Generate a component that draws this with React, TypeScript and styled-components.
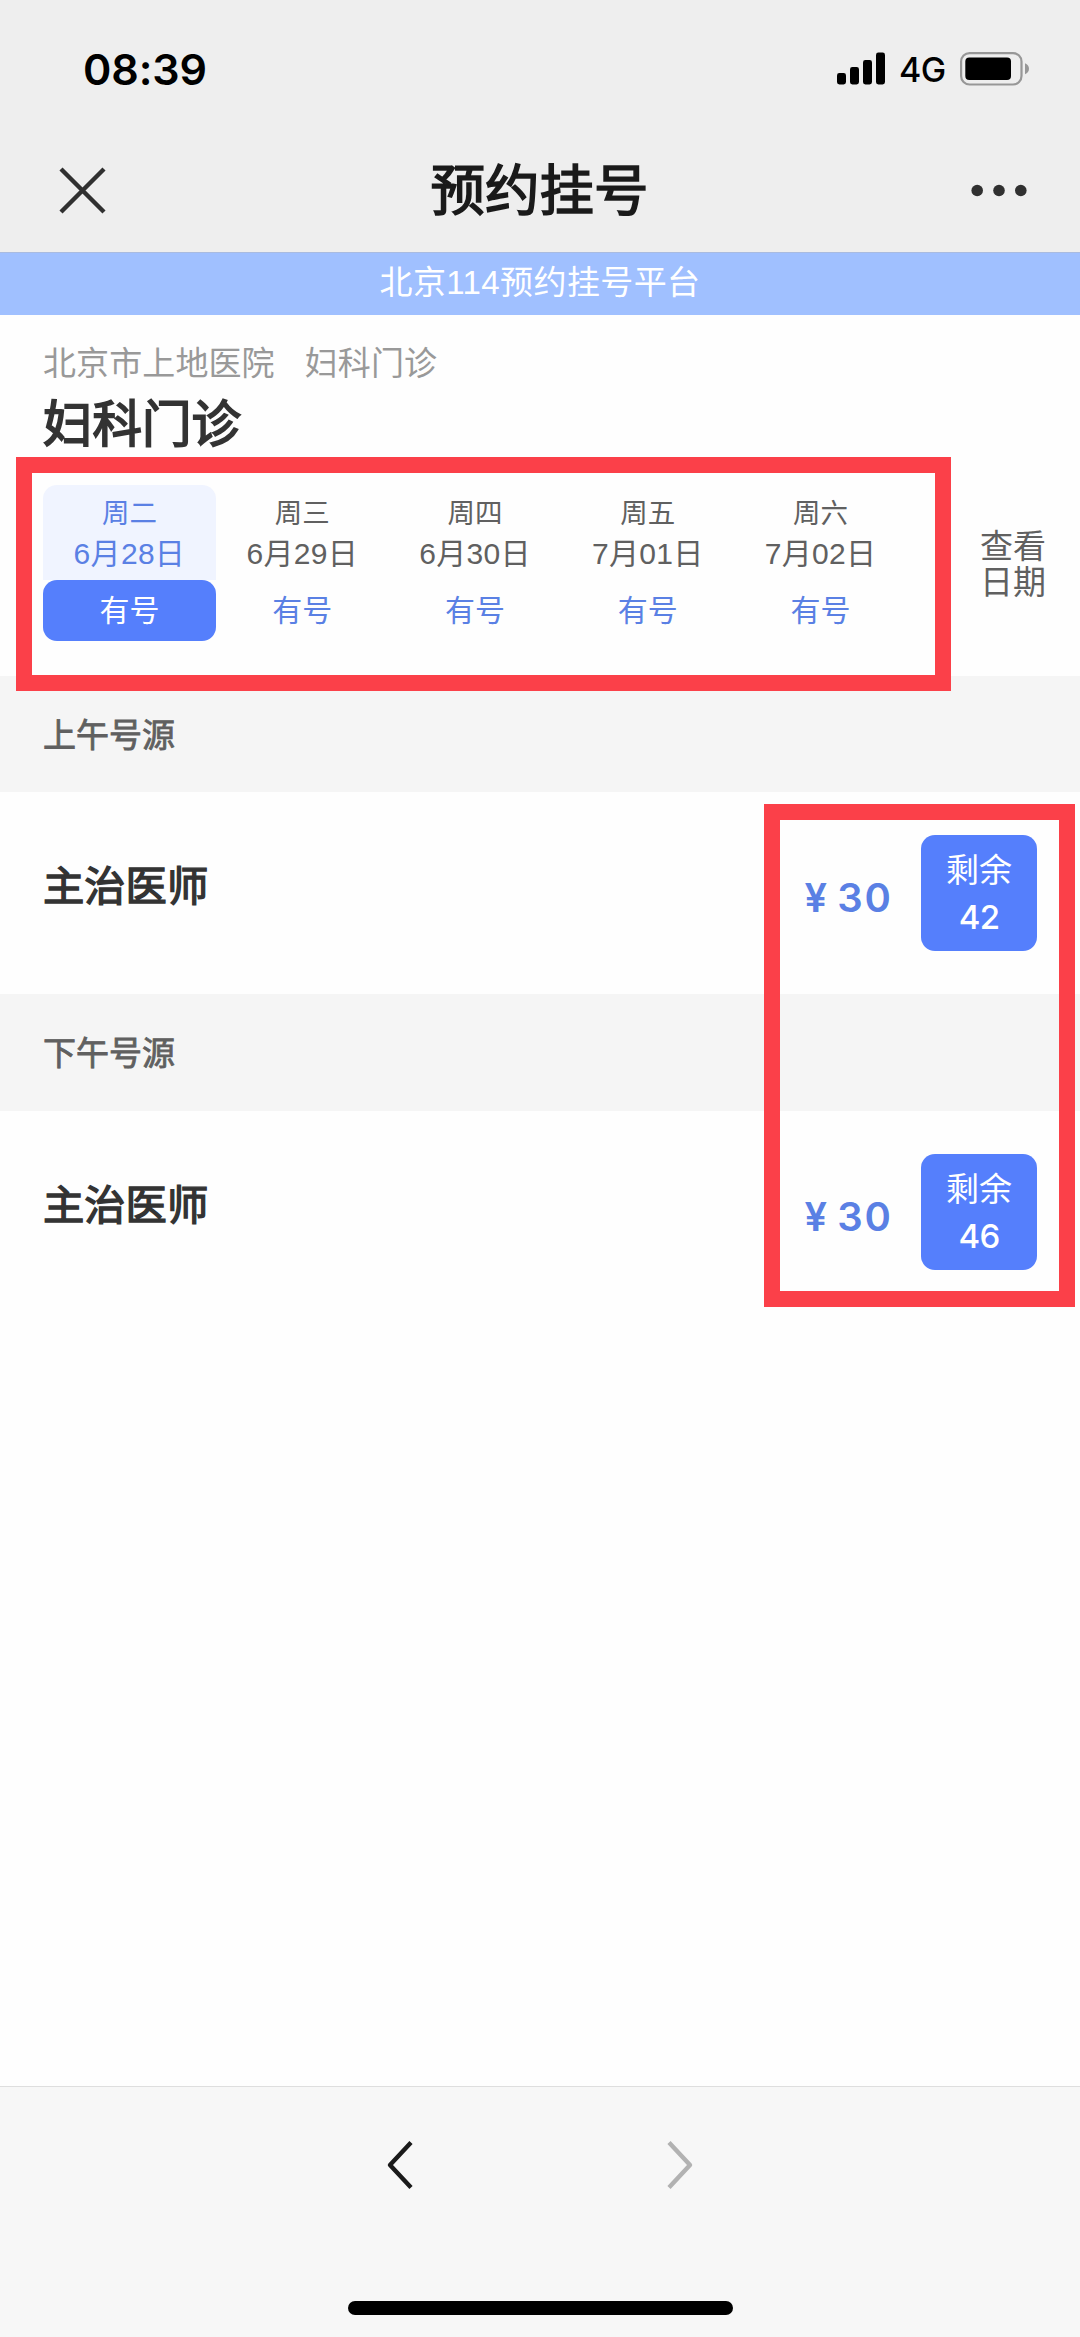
import React from "react";
import styled, { createGlobalStyle, css } from "styled-components";

const BLUE = "#557ffc";
const BLUE_TEXT = "#5a80e4";
const sans = `"Liberation Sans", "Noto Sans CJK SC", sans-serif`;
const ui = `Inter, "Noto Sans CJK SC", sans-serif`;

const GlobalStyle = createGlobalStyle`
  *, *::before, *::after { box-sizing: border-box; }
  body { margin: 0; background: #fefefe; }
  button { border: 0; padding: 0; margin: 0; background: none; font: inherit; color: inherit; }
`;

const Screen = styled.div`
  position: relative;
  display: flex;
  flex-direction: column;
  width: 1080px;
  height: 2337px;
  overflow: hidden;
  background: #fefefe;
  font-family: ${sans};
  color: #333;
`;

const TopArea = styled.header`
  height: 252px;
  background: #eeeeee;
`;

const StatusBar = styled.div`
  display: flex;
  align-items: center;
  justify-content: space-between;
  height: 128px;
  padding: 9px 51px 0 83px;
  font-family: ${ui};
  color: #000;
`;

const Clock = styled.time`
  font-size: 43px;
  line-height: 50px;
  font-weight: 600;
  letter-spacing: -0.1px;
`;

const StatusIcons = styled.div`
  display: flex;
  align-items: center;
`;

const Network = styled.span`
  width: 46px;
  margin: 3px 15px 0 14px;
  font-size: 34px;
  line-height: 40px;
  font-weight: 500;
  letter-spacing: -0.6px;
  white-space: nowrap;
`;

const NavBar = styled.nav`
  display: grid;
  grid-template-columns: 200px 1fr 200px;
  align-items: center;
  height: 124px;
  padding: 0 53px 0 56px;
`;

const NavTitle = styled.h1`
  margin: 3px 0 0 -4px;
  text-align: center;
  font-size: 54.5px;
  line-height: 64px;
  font-weight: 400;
  color: #1a1a1a;
  -webkit-text-stroke: 1.6px #1a1a1a;
`;

const IconButton = styled.button<{ $end?: boolean }>`
  display: flex;
  justify-self: ${(p) => (p.$end ? "end" : "start")};
`;

const Banner = styled.div`
  height: 63px;
  border-top: 1px solid #a9bbe0;
  background: #a0c0ff;
  color: #fff;
  font-size: 33px;
  line-height: 59px;
  letter-spacing: 0.4px;
  text-align: center;
`;

const Department = styled.section`
  padding: 27px 0 35px 43px;
`;

const Crumbs = styled.div`
  display: flex;
  gap: 30px;
  font-size: 33px;
  line-height: 44px;
  letter-spacing: 0.1px;
  color: #999;
`;

const DeptName = styled.h2`
  margin: 9px 0 30px;
  font-size: 49.5px;
  line-height: 60px;
  font-weight: 400;
  color: #333;
  -webkit-text-stroke: 1.8px #333;
`;

const DateRow = styled.div`
  display: flex;
  align-items: center;
`;

const DateTabs = styled.div`
  display: grid;
  grid-template-columns: repeat(5, 172.8px);
`;

const Day = styled.div<{ $active?: boolean }>`
  display: flex;
  flex-direction: column;
  height: 95px;
  padding-top: 10px;
  text-align: center;
  color: #606060;
  ${(p) =>
    p.$active &&
    css`
      border-radius: 14px 14px 0 0;
      background: #f0f4ff;
      color: ${BLUE_TEXT};
    `}
`;

const Weekday = styled.span`
  font-size: 27.5px;
  line-height: 37px;
`;

const DayDate = styled.span`
  font-size: 30px;
  line-height: 44px;
  letter-spacing: 0.3px;
`;

const Availability = styled.div<{ $active?: boolean }>`
  height: 61px;
  border-radius: 14px;
  background: ${(p) => (p.$active ? BLUE : "transparent")};
  color: ${(p) => (p.$active ? "#fff" : BLUE_TEXT)};
  font-size: 30px;
  line-height: 61px;
  text-align: center;
`;

const ViewDates = styled.button`
  width: 66px;
  margin: 4px 34px 0 auto;
  font-size: 33px;
  line-height: 36px;
  color: #606060;
`;

const SessionHeader = styled.h3`
  height: 116.3px;
  margin: 0;
  padding: 2px 0 0 43px;
  background: #f5f5f5;
  font-size: 33px;
  line-height: 116px;
  font-weight: 400;
  color: #606060;
  -webkit-text-stroke: 0.8px #606060;
`;

const DoctorRow = styled.div`
  display: flex;
  align-items: center;
  height: 202px;
  padding: 0 43px;
`;

const DoctorTitle = styled.span`
  flex: 1;
  padding-bottom: 12px;
  font-size: 41.3px;
  line-height: 50px;
  font-weight: 400;
  -webkit-text-stroke: 1.4px #333;
`;

const Price = styled.span`
  display: flex;
  gap: 8px;
  margin-right: 28px;
  padding-top: 10px;
  font-family: ${ui};
  font-size: 40px;
  line-height: 50px;
  font-weight: 600;
  letter-spacing: 2px;
  color: ${BLUE_TEXT};
`;

const RemainButton = styled.button`
  display: flex;
  flex-direction: column;
  align-items: center;
  width: 116px;
  height: 116px;
  padding-top: 13px;
  border-radius: 14px;
  background: ${BLUE};
  color: #fff;
  font-size: 33px;
  line-height: 46px;
`;

const Count = styled.span`
  font-family: ${ui};
  font-size: 33px;
  line-height: 46px;
  font-weight: 500;
  letter-spacing: -0.8px;
`;

const BottomBar = styled.footer`
  display: flex;
  flex-direction: column;
  align-items: center;
  justify-content: space-between;
  height: 251px;
  margin-top: auto;
  padding: 52px 0 22px;
  border-top: 1px solid #dedede;
  background: #f7f7f7;
`;

const Pager = styled.div`
  display: flex;
  justify-content: space-between;
  width: 310px;
`;

const HomeIndicator = styled.div`
  width: 385px;
  height: 14px;
  border-radius: 7px;
  background: #000;
`;

/* Red marker frames drawn over the page content */
const Highlight = styled.div<{ $x: number; $y: number; $w: number; $h: number }>`
  position: absolute;
  left: ${(p) => p.$x}px;
  top: ${(p) => p.$y}px;
  width: ${(p) => p.$w}px;
  height: ${(p) => p.$h}px;
  border: 16px solid #fb4049;
  pointer-events: none;
`;

const SignalIcon = () => (
  <svg width="48" height="33" viewBox="0 0 48 33">
    <rect x="0" y="21" width="9" height="11.5" rx="2.4" />
    <rect x="13" y="15" width="9" height="17.5" rx="2.4" />
    <rect x="26" y="8" width="9" height="24.5" rx="2.4" />
    <rect x="39" y="0.5" width="9" height="32" rx="2.4" />
  </svg>
);

const BatteryIcon = () => (
  <svg width="69" height="34" viewBox="0 0 69 34">
    <rect x="1.1" y="1.1" width="60.4" height="31.4" rx="8.5" fill="none" stroke="#979797" strokeWidth="2.2" />
    <rect x="5.3" y="5.6" width="45.7" height="22.4" rx="4" />
    <path d="M65 11.3c2.6.9 4 3 4 5.5s-1.4 4.6-4 5.5z" fill="#979797" />
  </svg>
);

const CloseIcon = () => (
  <svg width="52" height="52" viewBox="0 0 52 52" stroke="#303030" strokeWidth="4.4">
    <path d="M5 5l43 43M48 5L5 48" />
  </svg>
);

const MoreIcon = () => (
  <svg width="56" height="14" viewBox="0 0 56 14" fill="#303030">
    <circle cx="6.2" cy="7.5" r="5.8" />
    <circle cx="28" cy="7.5" r="5.8" />
    <circle cx="49.8" cy="7.5" r="5.8" />
  </svg>
);

const Chevron = ({ dir, color }: { dir: "left" | "right"; color: string }) => (
  <svg width="30" height="52" viewBox="0 0 30 52" fill="none" stroke={color} strokeWidth="4.4">
    <path
      d={dir === "left" ? "M26 3.5L5 26L26 48.500" : "M4 3.5L25 26L4 48.500"}
      strokeLinejoin="round"
    />
  </svg>
);

const days = [
  { week: "周二", date: "6月28日" },
  { week: "周三", date: "6月29日" },
  { week: "周四", date: "6月30日" },
  { week: "周五", date: "7月01日" },
  { week: "周六", date: "7月02日" },
];

const sessions = [
  { name: "上午号源", doctor: "主治医师", price: 30, left: 42 },
  { name: "下午号源", doctor: "主治医师", price: 30, left: 46 },
];

export default function App() {
  const selected = 0;
  return (
    <Screen lang="zh-CN">
      <GlobalStyle />
      <TopArea>
        <StatusBar>
          <Clock>08:39</Clock>
          <StatusIcons>
            <SignalIcon />
            <Network>4G</Network>
            <BatteryIcon />
          </StatusIcons>
        </StatusBar>
        <NavBar>
          <IconButton aria-label="关闭"><CloseIcon /></IconButton>
          <NavTitle>预约挂号</NavTitle>
          <IconButton $end aria-label="更多"><MoreIcon /></IconButton>
        </NavBar>
      </TopArea>
      <Banner>北京114预约挂号平台</Banner>
      <Department>
        <Crumbs>
          <span>北京市上地医院</span>
          <span>妇科门诊</span>
        </Crumbs>
        <DeptName>妇科门诊</DeptName>
        <DateRow>
          <DateTabs>
            {days.map((d, i) => (
              <div key={d.date}>
                <Day $active={i === selected}>
                  <Weekday>{d.week}</Weekday>
                  <DayDate>{d.date}</DayDate>
                </Day>
                <Availability $active={i === selected}>有号</Availability>
              </div>
            ))}
          </DateTabs>
          <ViewDates>查看日期</ViewDates>
        </DateRow>
      </Department>
      {sessions.map((s) => (
        <section key={s.name}>
          <SessionHeader>{s.name}</SessionHeader>
          <DoctorRow>
            <DoctorTitle>{s.doctor}</DoctorTitle>
            <Price>
              <span>¥</span>
              <span>{s.price}</span>
            </Price>
            <RemainButton>
              <span>剩余</span>
              <Count>{s.left}</Count>
            </RemainButton>
          </DoctorRow>
        </section>
      ))}
      <BottomBar>
        <Pager>
          <IconButton aria-label="后退"><Chevron dir="left" color="#1a1a1a" /></IconButton>
          <IconButton aria-label="前进"><Chevron dir="right" color="#b2b2b2" /></IconButton>
        </Pager>
        <HomeIndicator />
      </BottomBar>
      <Highlight $x={16} $y={457} $w={935} $h={234} />
      <Highlight $x={764} $y={804} $w={311} $h={503} />
    </Screen>
  );
}
